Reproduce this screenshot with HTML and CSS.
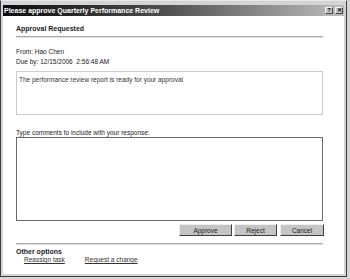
FILE: index.html
```html
<!DOCTYPE html>
<html lang="en">
<head>
    <meta charset="UTF-8">
    <title>Please approve Quarterly Performance Review</title>
    <link rel="stylesheet" href="styles.css">
</head>
<body>
    <div class="window">
        <div class="titlebar">
            <span class="title">Please approve Quarterly Performance Review</span>
            <div class="caption-buttons">
                <span class="caption-btn">?</span>
                <span class="caption-btn">&#x2715;</span>
            </div>
        </div>
        <div class="content">
            <div class="heading">Approval Requested</div>
            <div class="rule"></div>
            <div class="meta">
                <div>From: Hao Chen</div>
                <div>Due by: 12/15/2006&nbsp; 2:56:48 AM</div>
            </div>
            <div class="message">The performance review report is ready for your approval</div>
            <div class="comments-label">Type comments to include with your response:</div>
            <div class="comments"></div>
            <div class="actions">
                <button class="btn btn-approve">Approve</button>
                <button class="btn btn-reject">Reject</button>
                <button class="btn btn-cancel">Cancel</button>
            </div>
            <div class="rule rule-bottom"></div>
            <div class="options-title">Other options</div>
            <div class="options">
                <a href="#">Reassign task</a>
                <a href="#">Request a change</a>
            </div>
        </div>
    </div>
</body>
</html>
```

FILE: styles.css
```css
* {
    box-sizing: border-box;
}
body {
    margin: 0;
    background: #d6d6d6;
    font-family: "Liberation Sans", Arial, sans-serif;
    font-size: 6.5px;
    color: #222;
}
.window {
    width: 347px;
    height: 277px;
    display: flex;
    flex-direction: column;
    background: #d4d4d4;
    border: 1px solid #3c3c3c;
    border-top-color: #e8e8e8;
    padding: 4px 2px 2px 2px;
}
.titlebar {
    height: 11px;
    display: flex;
    align-items: center;
    justify-content: space-between;
    background: linear-gradient(to right, #0c0c0c, #4a4a4a 45%, #bdbdbd);
    padding: 0 1px 0 1px;
}
.title {
    color: #fff;
    font-weight: bold;
    font-size: 7px;
    white-space: nowrap;
}
.caption-buttons {
    display: flex;
    gap: 2px;
}
.caption-btn {
    width: 8px;
    height: 7px;
    background: #c8c8c8;
    border: 1px solid #444;
    border-top-color: #f2f2f2;
    border-left-color: #f2f2f2;
    font-size: 6px;
    font-weight: bold;
    line-height: 5px;
    text-align: center;
    color: #000;
}
.content {
    flex: 1;
    background: #fff;
    padding: 8px 21px 0 13px;
    display: flex;
    flex-direction: column;
}
.heading {
    font-weight: bold;
    font-size: 7px;
    line-height: 10px;
    color: #1c1c1c;
}
.rule {
    height: 2px;
    margin-top: 2px;
    border-top: 1px solid #a9a9a9;
    border-bottom: 1px solid #e2e2e2;
}
.meta {
    margin-top: 9px;
    line-height: 10px;
}
.message {
    margin-top: 4px;
    height: 44px;
    border: 1px solid #cbcbcb;
    padding: 3px 2px;
    line-height: 9px;
    color: #333;
}
.comments-label {
    margin-top: 13px;
    line-height: 9px;
}
.comments {
    height: 84px;
    border: 1px solid #6a6a6a;
}
.actions {
    margin-top: 3px;
    display: flex;
    justify-content: flex-end;
    gap: 2px;
    margin-right: -1px;
}
.btn {
    height: 12px;
    padding: 0;
    background: #c4c4c4;
    border: 1px solid #3e3e3e;
    border-top-color: #efefef;
    border-left-color: #efefef;
    font-family: "Liberation Sans", Arial, sans-serif;
    font-size: 6.5px;
    color: #222;
}
.btn-approve {
    width: 53px;
}
.btn-reject {
    width: 43px;
    margin-right: 1px;
}
.btn-cancel {
    width: 44px;
}
.rule-bottom {
    margin-top: 7px;
}
.options-title {
    margin-top: 3px;
    font-weight: bold;
    font-size: 7px;
    line-height: 8px;
    color: #1c1c1c;
}
.options {
    display: flex;
    gap: 20px;
    padding-left: 8px;
    line-height: 8px;
}
.options a {
    color: #333;
    text-decoration: underline;
}
```
